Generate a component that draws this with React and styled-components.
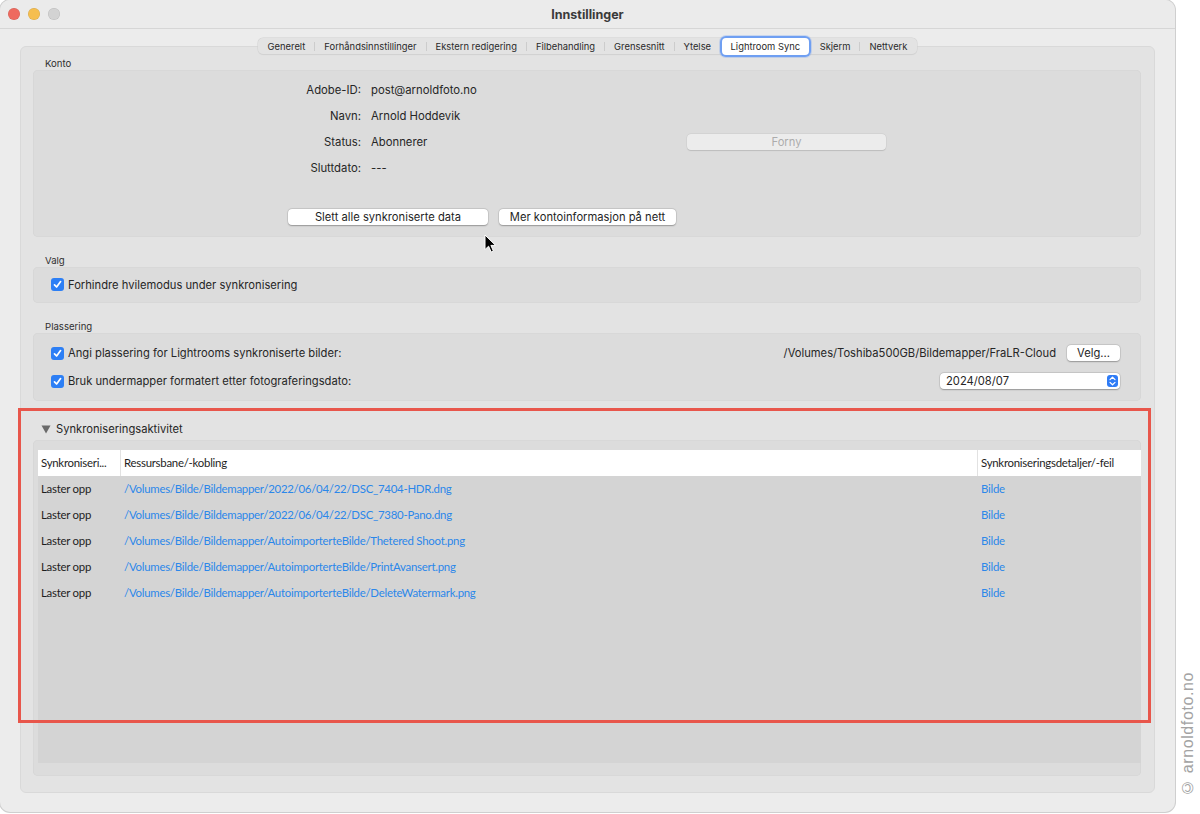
import React from "react";
import styled, { createGlobalStyle } from "styled-components";

const GlobalStyle = createGlobalStyle`
  html, body {
    margin: 0;
    padding: 0;
    background: #ffffff;
  }
  body {
    font-family: Inter, "Liberation Sans", "Noto Sans", sans-serif;
    color: #262626;
    -webkit-font-smoothing: antialiased;
  }
  * {
    box-sizing: border-box;
  }
`;

const tabs = [
  "Generelt",
  "Forhåndsinnstillinger",
  "Ekstern redigering",
  "Filbehandling",
  "Grensesnitt",
  "Ytelse",
  "Lightroom Sync",
  "Skjerm",
  "Nettverk",
];
const activeTab = "Lightroom Sync";

const account = [
  { label: "Adobe-ID:", value: "post@arnoldfoto.no" },
  { label: "Navn:", value: "Arnold Hoddevik" },
  { label: "Status:", value: "Abonnerer", renew: true },
  { label: "Sluttdato:", value: "---" },
];

const activity = [
  "/Volumes/Bilde/Bildemapper/2022/06/04/22/DSC_7404-HDR.dng",
  "/Volumes/Bilde/Bildemapper/2022/06/04/22/DSC_7380-Pano.dng",
  "/Volumes/Bilde/Bildemapper/AutoimporterteBilde/Thetered Shoot.png",
  "/Volumes/Bilde/Bildemapper/AutoimporterteBilde/PrintAvansert.png",
  "/Volumes/Bilde/Bildemapper/AutoimporterteBilde/DeleteWatermark.png",
];

const Page = styled.div`
  position: relative;
  width: 1200px;
  height: 814px;
  display: flex;
  overflow: hidden;
  background: #ffffff;
`;

const Window = styled.div`
  width: 1175px;
  height: 812px;
  flex-shrink: 0;
  display: flex;
  flex-direction: column;
  background: #ececec;
  border-radius: 10px;
  box-shadow: 0 0 0 1px #cfcfcf;
  overflow: hidden;
`;

const TitleBar = styled.div`
  height: 29px;
  flex-shrink: 0;
  display: grid;
  grid-template-columns: 1fr auto 1fr;
  align-items: center;
  border-bottom: 1px solid #d6d6d6;
  background: #ebebeb;
`;

const Lights = styled.div`
  display: flex;
  gap: 8px;
  padding-left: 8px;
`;

const Light = styled.span`
  width: 12px;
  height: 12px;
  border-radius: 50%;
  background: ${(p) => p.$color};
  box-shadow: inset 0 0 0 0.5px rgba(0, 0, 0, 0.12);
`;

const Title = styled.div`
  font-size: 12.5px;
  font-weight: 700;
  color: #3a3a3a;
`;

const Content = styled.div`
  flex: 1;
  display: flex;
  flex-direction: column;
  padding: 9px 20px 19px;
`;

const TabBar = styled.div`
  position: relative;
  z-index: 1;
  align-self: center;
  display: flex;
  align-items: center;
  height: 16px;
  margin-bottom: -8px;
  padding: 0 1px;
  background: #e3e3e3;
  border-radius: 5px;
  box-shadow: 0 0 0 0.5px #d2d2d2, 0 0.5px 1px rgba(0, 0, 0, 0.08);
`;

const Tab = styled.div`
  height: ${(p) => (p.$active ? "17px" : "16px")};
  display: flex;
  align-items: center;
  padding: 0 ${(p) => (p.$active ? "8.5px" : "9px")};
  font-size: 9.4px;
  color: #2a2a2a;
  white-space: nowrap;
  ${(p) =>
    p.$active &&
    `
    background: #ffffff;
    border-radius: 4px;
    box-shadow: 0 0 0 2px #6f9ff2, 0 0 0 3px rgba(111,159,242,0.3);
    margin: 0 1px;
  `}
`;

const TabDivider = styled.span`
  width: 1px;
  height: 9px;
  background: ${(p) => (p.$hidden ? "transparent" : "#cccccc")};
`;

const TabBox = styled.div`
  flex: 1;
  display: flex;
  flex-direction: column;
  background: #e3e3e3;
  border: 1px solid #d9d9d9;
  border-radius: 6px;
  padding: 11px 13px 16px 12px;
`;

const GroupLabel = styled.div`
  font-size: 9.6px;
  line-height: 12px;
  height: 12px;
  margin: ${(p) => p.$top || 0}px 0 0 12px;
  color: #2f2f2f;
`;

const Group = styled.div`
  background: #dcdcdc;
  border-radius: 5px;
  box-shadow: inset 0 0 0 0.5px #d3d3d3;
`;

const AccountBox = styled(Group)`
  height: 167px;
  padding: 7px 0 12px;
  display: flex;
  flex-direction: column;
`;

const InfoGrid = styled.div`
  display: grid;
  grid-template-columns: 328px 306px 199px;
  grid-auto-rows: 26px;
  column-gap: 10px;
  align-items: center;
  font-size: 11.3px;
`;

const InfoLabel = styled.div`
  text-align: right;
`;

const ButtonRow = styled.div`
  display: flex;
  gap: 11px;
  margin: auto 0 0 255px;
`;

const PushButton = styled.div`
  width: ${(p) => p.$w}px;
  height: 16px;
  display: flex;
  align-items: center;
  justify-content: center;
  background: #ffffff;
  border-radius: 4px;
  font-size: 11.2px;
  color: #1f1f1f;
  box-shadow: 0 0.5px 1.5px rgba(0, 0, 0, 0.28), 0 0 0 0.5px rgba(0, 0, 0, 0.1);
`;

const DisabledButton = styled(PushButton)`
  background: #ececec;
  color: #acacac;
  box-shadow: 0 0.5px 1px rgba(0, 0, 0, 0.12), 0 0 0 0.5px rgba(0, 0, 0, 0.05);
`;

const OptionBox = styled(Group)`
  padding: ${(p) => (p.$rows > 1 ? "6px" : "5px")} 21px 6px 18px;
`;

const OptionRow = styled.div`
  height: ${(p) => (p.$rows > 1 ? 28 : 25)}px;
  display: flex;
  align-items: center;
  justify-content: space-between;
  font-size: 11.2px;
`;

const CheckLabel = styled.label`
  display: flex;
  align-items: center;
  gap: 4px;
`;

const Box = styled.span`
  width: 13px;
  height: 13px;
  border-radius: 3px;
  background: #2d7ff5;
  display: flex;
  align-items: center;
  justify-content: center;
`;

const RightSide = styled.div`
  display: flex;
  align-items: center;
  gap: 11px;
`;

const Popup = styled.div`
  width: 180px;
  height: 16px;
  display: flex;
  align-items: center;
  justify-content: space-between;
  padding: 0 2px 0 6px;
  background: #ffffff;
  border-radius: 4px;
  font-size: 11.2px;
  box-shadow: 0 0.5px 1.5px rgba(0, 0, 0, 0.28), 0 0 0 0.5px rgba(0, 0, 0, 0.1);
`;

const Stepper = styled.span`
  width: 11px;
  height: 12px;
  border-radius: 3px;
  background: #2f7cf6;
  display: flex;
  align-items: center;
  justify-content: center;
`;

const Disclosure = styled.div`
  display: flex;
  align-items: center;
  gap: 5px;
  height: 16px;
  margin: 20px 0 3px 8px;
  font-size: 11.2px;
`;

const TableBox = styled(Group)`
  flex: 1;
  display: flex;
  padding: 10px 0 13px 5px;
`;

const Table = styled.div`
  flex: 1;
  display: flex;
  flex-direction: column;
  background: #d4d4d4;
  font-family: Lato, "Open Sans", sans-serif;
  font-size: 11.4px;
  letter-spacing: -0.25px;
`;

const TableRow = styled.div`
  display: grid;
  grid-template-columns: 82px 857px 1fr;
  height: 26px;
  align-items: center;
  background: ${(p) => (p.$head ? "#ffffff" : "transparent")};
  color: #1e1e1e;
`;

const Cell = styled.div`
  height: 100%;
  display: flex;
  align-items: center;
  padding: 0 0 1px ${(p) => (p.$first ? 3 : 4)}px;
  white-space: nowrap;
  overflow: hidden;
  color: ${(p) => (p.$link ? "#2b87ea" : "inherit")};
  ${(p) =>
    p.$divided &&
    `
    box-shadow: inset 1px 0 0 #e2e2e2;
  `}
`;

const Highlight = styled.div`
  position: absolute;
  left: 18px;
  top: 408px;
  width: 1133px;
  height: 315px;
  border: 3px solid #e8564b;
  pointer-events: none;
`;

const Cursor = styled.svg`
  position: absolute;
  left: 484px;
  top: 234px;
`;

const Side = styled.div`
  flex: 1;
  display: flex;
  align-items: flex-end;
  justify-content: center;
  padding-bottom: 18px;
`;

const Watermark = styled.div`
  writing-mode: vertical-rl;
  transform: rotate(180deg);
  font-family: "Liberation Sans", sans-serif;
  font-size: 16px;
  letter-spacing: 0.6px;
  color: #a3a3a3;
`;

const Check = () => (
  <Box>
    <svg width="9" height="9" viewBox="0 0 9 9">
      <path d="M1.5 4.8 L3.6 7 L7.6 1.6" fill="none" stroke="#fff" strokeWidth="1.7" strokeLinecap="round" strokeLinejoin="round" />
    </svg>
  </Box>
);

export default function App() {
  const activeIndex = tabs.indexOf(activeTab);
  return (
    <Page>
      <GlobalStyle />
      <Window>
        <TitleBar>
          <Lights>
            <Light $color="#ee6a5f" />
            <Light $color="#f5be4f" />
            <Light $color="#d3d3d3" />
          </Lights>
          <Title>Innstillinger</Title>
          <div />
        </TitleBar>
        <Content>
          <TabBar>
            {tabs.map((t, i) => (
              <React.Fragment key={t}>
                {i > 0 && <TabDivider $hidden={i === activeIndex || i - 1 === activeIndex} />}
                <Tab $active={t === activeTab}>{t}</Tab>
              </React.Fragment>
            ))}
          </TabBar>
          <TabBox>
            <GroupLabel>Konto</GroupLabel>
            <AccountBox>
              <InfoGrid>
                {account.map((row) => (
                  <React.Fragment key={row.label}>
                    <InfoLabel>{row.label}</InfoLabel>
                    <div>{row.value}</div>
                    {row.renew ? <DisabledButton $w={199}>Forny</DisabledButton> : <div />}
                  </React.Fragment>
                ))}
              </InfoGrid>
              <ButtonRow>
                <PushButton $w={200}>Slett alle synkroniserte data</PushButton>
                <PushButton $w={177}>Mer kontoinformasjon på nett</PushButton>
              </ButtonRow>
            </AccountBox>

            <GroupLabel $top={18}>Valg</GroupLabel>
            <OptionBox $rows={1}>
              <OptionRow $rows={1}>
                <CheckLabel>
                  <Check />
                  Forhindre hvilemodus under synkronisering
                </CheckLabel>
              </OptionRow>
            </OptionBox>

            <GroupLabel $top={18}>Plassering</GroupLabel>
            <OptionBox $rows={2}>
              <OptionRow $rows={2}>
                <CheckLabel>
                  <Check />
                  Angi plassering for Lightrooms synkroniserte bilder:
                </CheckLabel>
                <RightSide>
                  <span>/Volumes/Toshiba500GB/Bildemapper/FraLR-Cloud</span>
                  <PushButton $w={53}>Velg...</PushButton>
                </RightSide>
              </OptionRow>
              <OptionRow $rows={2}>
                <CheckLabel>
                  <Check />
                  Bruk undermapper formatert etter fotograferingsdato:
                </CheckLabel>
                <Popup>
                  <span>2024/08/07</span>
                  <Stepper>
                    <svg width="7" height="10" viewBox="0 0 7 10">
                      <path d="M1 3.6 L3.5 1.2 L6 3.6 M1 6.4 L3.5 8.8 L6 6.4" fill="none" stroke="#fff" strokeWidth="1.2" strokeLinecap="round" strokeLinejoin="round" />
                    </svg>
                  </Stepper>
                </Popup>
              </OptionRow>
            </OptionBox>

            <Disclosure>
              <svg width="10" height="9" viewBox="0 0 10 9">
                <path d="M0.5 0.5 L9.5 0.5 L5 8.5 Z" fill="#6a6a6a" />
              </svg>
              Synkroniseringsaktivitet
            </Disclosure>
            <TableBox>
              <Table>
                <TableRow $head>
                  <Cell $first>Synkroniseri...</Cell>
                  <Cell $divided>Ressursbane/-kobling</Cell>
                  <Cell $divided>Synkroniseringsdetaljer/-feil</Cell>
                </TableRow>
                {activity.map((path) => (
                  <TableRow key={path}>
                    <Cell $first>Laster opp</Cell>
                    <Cell $link>{path}</Cell>
                    <Cell $link>Bilde</Cell>
                  </TableRow>
                ))}
              </Table>
            </TableBox>
          </TabBox>
        </Content>
      </Window>
      <Side>
        <Watermark>© arnoldfoto.no</Watermark>
      </Side>
      <Highlight />
      <Cursor width="13" height="20" viewBox="0 0 13 20">
        <path d="M1 1 L1 15.5 L4.6 12.2 L7.2 18 L9.4 17 L6.9 11.4 L11.6 11.4 Z" fill="#000" stroke="#fff" strokeWidth="1" strokeLinejoin="round" />
      </Cursor>
    </Page>
  );
}
